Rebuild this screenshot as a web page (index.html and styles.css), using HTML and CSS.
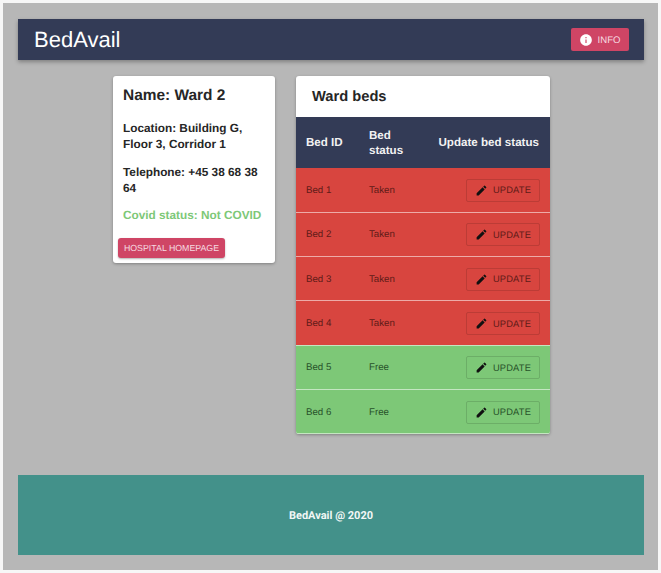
FILE: index.html
```html
<!DOCTYPE html>
<html lang="en">
<head>
<meta charset="utf-8">
<title>BedAvail</title>
<link rel="stylesheet" href="styles.css">
</head>
<body>
<div class="page">
  <header class="appbar">
    <h1 class="brand">BedAvail</h1>
    <button class="btn-info"><svg class="ico-info" viewBox="0 0 24 24"><path fill="#fff" d="M12 2C6.48 2 2 6.48 2 12s4.48 10 10 10 10-4.48 10-10S17.52 2 12 2zm1 15h-2v-6h2v6zm0-8h-2V7h2v2z"/></svg><span class="btn-label">INFO</span></button>
  </header>
  <main class="content">
    <section class="card ward">
      <h2 class="ward-name">Name: Ward 2</h2>
      <p class="ward-line">Location: Building G, Floor 3, Corridor 1</p>
      <p class="ward-line">Telephone: +45 38 68 38 64</p>
      <p class="ward-line covid">Covid status: Not COVID</p>
      <button class="btn-home">HOSPITAL HOMEPAGE</button>
    </section>
    <section class="card beds">
      <h2 class="beds-title">Ward beds</h2>
      <table class="bed-table">
        <thead>
          <tr><th class="c-id">Bed ID</th><th class="c-status">Bed status</th><th class="c-update">Update bed status</th></tr>
        </thead>
        <tbody>
          <tr class="taken"><td>Bed 1</td><td>Taken</td><td class="c-update"><button class="btn-update"><svg class="ico-edit" viewBox="0 0 24 24"><path d="M3 17.25V21h3.75L17.81 9.94l-3.75-3.75L3 17.25zM20.71 7.04a1 1 0 0 0 0-1.41l-2.34-2.34a1 1 0 0 0-1.41 0l-1.83 1.83 3.75 3.75 1.83-1.83z"/></svg>UPDATE</button></td></tr>
          <tr class="taken"><td>Bed 2</td><td>Taken</td><td class="c-update"><button class="btn-update"><svg class="ico-edit" viewBox="0 0 24 24"><path d="M3 17.25V21h3.75L17.81 9.94l-3.75-3.75L3 17.25zM20.71 7.04a1 1 0 0 0 0-1.41l-2.34-2.34a1 1 0 0 0-1.41 0l-1.83 1.83 3.75 3.75 1.83-1.83z"/></svg>UPDATE</button></td></tr>
          <tr class="taken"><td>Bed 3</td><td>Taken</td><td class="c-update"><button class="btn-update"><svg class="ico-edit" viewBox="0 0 24 24"><path d="M3 17.25V21h3.75L17.81 9.94l-3.75-3.75L3 17.25zM20.71 7.04a1 1 0 0 0 0-1.41l-2.34-2.34a1 1 0 0 0-1.41 0l-1.83 1.83 3.75 3.75 1.83-1.83z"/></svg>UPDATE</button></td></tr>
          <tr class="taken"><td>Bed 4</td><td>Taken</td><td class="c-update"><button class="btn-update"><svg class="ico-edit" viewBox="0 0 24 24"><path d="M3 17.25V21h3.75L17.81 9.94l-3.75-3.75L3 17.25zM20.71 7.04a1 1 0 0 0 0-1.41l-2.34-2.34a1 1 0 0 0-1.41 0l-1.83 1.83 3.75 3.75 1.83-1.83z"/></svg>UPDATE</button></td></tr>
          <tr class="free"><td>Bed 5</td><td>Free</td><td class="c-update"><button class="btn-update"><svg class="ico-edit" viewBox="0 0 24 24"><path d="M3 17.25V21h3.75L17.81 9.94l-3.75-3.75L3 17.25zM20.71 7.04a1 1 0 0 0 0-1.41l-2.34-2.34a1 1 0 0 0-1.41 0l-1.83 1.83 3.75 3.75 1.83-1.83z"/></svg>UPDATE</button></td></tr>
          <tr class="free"><td>Bed 6</td><td>Free</td><td class="c-update"><button class="btn-update"><svg class="ico-edit" viewBox="0 0 24 24"><path d="M3 17.25V21h3.75L17.81 9.94l-3.75-3.75L3 17.25zM20.71 7.04a1 1 0 0 0 0-1.41l-2.34-2.34a1 1 0 0 0-1.41 0l-1.83 1.83 3.75 3.75 1.83-1.83z"/></svg>UPDATE</button></td></tr>
        </tbody>
      </table>
    </section>
  </main>
  <footer class="footer">BedAvail @ 2020</footer>
</div>
</body>
</html>
```
FILE: styles.css
```css
* { box-sizing: border-box; }
html, body { height: 100%; }
body {
  margin: 0;
  padding: 3px;
  background: #f7f7f7;
  font-family: "Liberation Sans", Arial, sans-serif;
  color: #262626;
  text-rendering: geometricPrecision;
}
.page {
  height: 567px;
  background: #b7b7b7;
  padding: 16px 14px 15px 15px;
  display: flex;
  flex-direction: column;
}
.appbar {
  height: 41px;
  flex: none;
  background: #333b56;
  display: flex;
  align-items: center;
  justify-content: space-between;
  padding: 0 15px 0 16px;
  box-shadow: 0 2px 4px rgba(0,0,0,.3);
}
.brand {
  margin: 0;
  font-size: 22px;
  font-weight: 400;
  color: #fff;
}
.btn-info {
  width: 58px;
  height: 23px;
  border: 0;
  border-radius: 2px;
  background: #cf4565;
  color: #f6dbe1;
  font: 400 9.6px "Liberation Sans", Arial, sans-serif;
  text-rendering: geometricPrecision;
  display: flex;
  align-items: center;
  justify-content: center;
  gap: 5px;
  padding: 0 1px 0 0;
}
.btn-label { padding-top: 1px; }
.ico-info { width: 14px; height: 14px; }
.content {
  display: flex;
  align-items: flex-start;
  justify-content: flex-start;
  gap: 21px;
  padding: 16px 0 0 95px;
  flex: 1;
}
.card {
  background: #fff;
  border-radius: 3px;
  box-shadow: 0 1px 3px rgba(0,0,0,.3);
  overflow: hidden;
}
.ward {
  width: 162px;
  height: 187px;
  padding: 10px 5px 0 5px;
}
.ward-name {
  margin: 0 0 15px 5px;
  font-size: 15.45px;
  line-height: 19px;
}
.ward-line {
  margin: 0 0 11.5px 5px;
  font-size: 11.8px;
  font-weight: 700;
  line-height: 16px;
}
.covid { color: #7dc877; margin-bottom: 15px; }
.btn-home {
  display: block;
  width: 107px;
  height: 20px;
  border: 0;
  border-radius: 3px;
  padding: 0;
  background: #cf4565;
  color: #f6dbe1;
  font: 400 8.8px "Liberation Sans", Arial, sans-serif;
  text-rendering: geometricPrecision;
  box-shadow: 0 1px 2px rgba(0,0,0,.3);
}
.beds { width: 254px; }
.beds-title {
  margin: 0;
  height: 41px;
  padding: 12px 0 0 16px;
  font-size: 14.7px;
  line-height: 19px;
}
.bed-table {
  width: 100%;
  border-collapse: collapse;
  table-layout: fixed;
}
.bed-table th {
  height: 51px;
  background: #333b56;
  color: #f2f2f2;
  font-size: 11.6px;
  font-weight: 700;
  line-height: 15.5px;
  text-align: left;
  padding: 1px 0 0 10px;
}
.c-id { width: 63px; }
.c-status { width: 55px; padding-right: 12px !important; }
.bed-table th.c-update { text-align: right; padding: 1px 11px 0 0; white-space: nowrap; }
.bed-table td {
  height: 44.3px;
  padding: 1px 0 0 10px;
  font-size: 9.7px;
  border-bottom: 1px solid rgba(255,255,255,.55);
}
.bed-table td.c-update { text-align: right; padding: 1px 10px 0 0; }
.taken td { background: #d8453f; color: #5f1b18; }
.free td { background: #7dc877; color: #28522a; }
.btn-update {
  display: inline-flex;
  align-items: center;
  justify-content: center;
  gap: 5px;
  width: 74px;
  height: 23px;
  padding: 0;
  background: transparent;
  border-radius: 2px;
  border: 1px solid rgba(0,0,0,.13);
  color: inherit;
  font: 400 9.3px "Liberation Sans", Arial, sans-serif;
  text-rendering: geometricPrecision;
  letter-spacing: .2px;
}
.ico-edit { width: 13px; height: 13px; fill: #111; }
.footer {
  height: 80px;
  flex: none;
  background: #43918a;
  color: #f2f7f6;
  font: 700 11px Roboto, sans-serif;
  display: flex;
  align-items: center;
  justify-content: center;
}
```
